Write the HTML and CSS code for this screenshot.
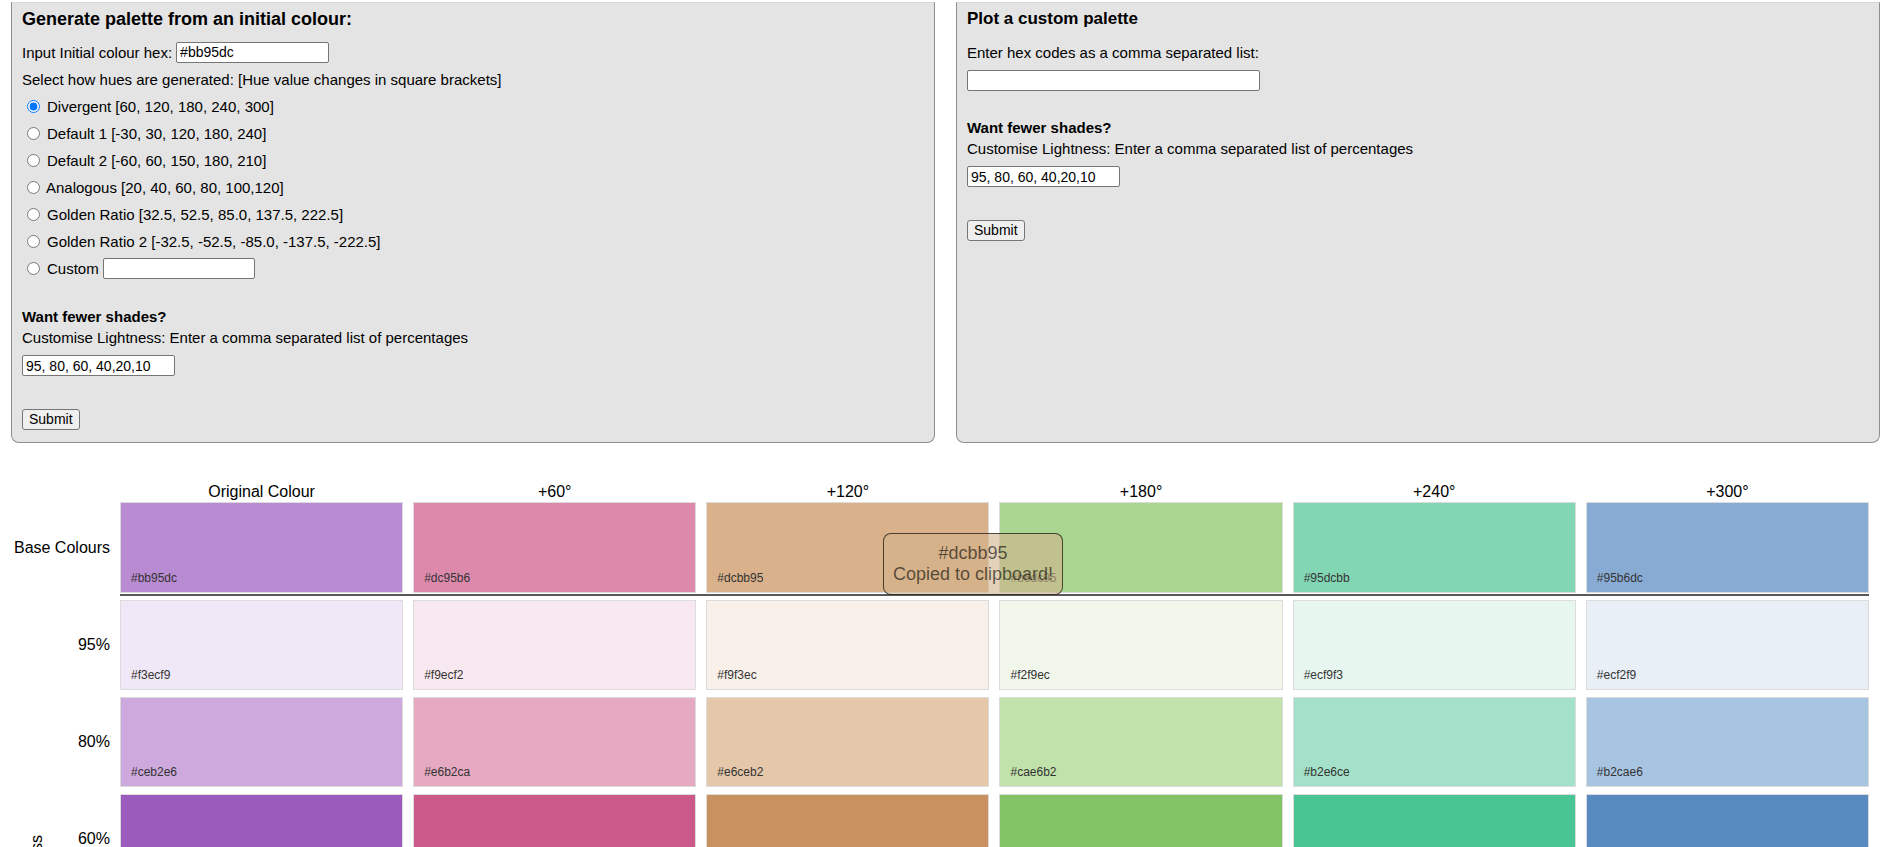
FILE: index.html
```html
<!DOCTYPE html>
<html lang="en">
<head>
<meta charset="utf-8">
<title>Colour palette generator</title>
<link rel="stylesheet" href="styles.css">
</head>
<body>
<div class="forms">
  <form class="panel panel-generate">
    <h3 class="panel-title">Generate palette from an initial colour:</h3>
    <div class="rows">
      <label class="row">Input Initial colour hex:<input class="field field-hex" type="text" value="#bb95dc"></label>
      <div class="row">Select how hues are generated: [Hue value changes in square brackets]</div>
      <label class="row"><input class="radio" type="radio" name="hue" checked>Divergent [60, 120, 180, 240, 300]</label>
      <label class="row"><input class="radio" type="radio" name="hue">Default 1 [-30, 30, 120, 180, 240]</label>
      <label class="row"><input class="radio" type="radio" name="hue">Default 2 [-60, 60, 150, 180, 210]</label>
      <label class="row"><input class="radio radio-tight" type="radio" name="hue">Analogous [20, 40, 60, 80, 100,120]</label>
      <label class="row"><input class="radio" type="radio" name="hue">Golden Ratio [32.5, 52.5, 85.0, 137.5, 222.5]</label>
      <label class="row"><input class="radio" type="radio" name="hue">Golden Ratio 2 [-32.5, -52.5, -85.0, -137.5, -222.5]</label>
      <label class="row"><input class="radio" type="radio" name="hue">Custom<input class="field field-custom" type="text"></label>
    </div>
    <div class="shades shades-generate">
      <div class="shades-title">Want fewer shades?</div>
      <div>Customise Lightness: Enter a comma separated list of percentages</div>
    </div>
    <input class="field field-light" type="text" value="95, 80, 60, 40,20,10">
    <button class="submit" type="button">Submit</button>
  </form>

  <form class="panel panel-custom">
    <h3 class="panel-title panel-title-small">Plot a custom palette</h3>
    <div class="row">Enter hex codes as a comma separated list:</div>
    <input class="field field-list" type="text">
    <div class="shades shades-custom">
      <div class="shades-title">Want fewer shades?</div>
      <div>Customise Lightness: Enter a comma separated list of percentages</div>
    </div>
    <input class="field field-light" type="text" value="95, 80, 60, 40,20,10">
    <button class="submit" type="button">Submit</button>
  </form>
</div>

<section class="palette">
  <div class="pal-row pal-head">
    <div></div>
    <div class="col-head">Original Colour</div>
    <div class="col-head">+60°</div>
    <div class="col-head">+120°</div>
    <div class="col-head">+180°</div>
    <div class="col-head">+240°</div>
    <div class="col-head">+300°</div>
  </div>

  <div class="pal-row pal-base">
    <div class="row-label">Base Colours</div>
    <div class="swatch" style="background:#b98bd2"><span>#bb95dc</span></div>
    <div class="swatch" style="background:#dd89ab"><span>#dc95b6</span></div>
    <div class="swatch" style="background:#d9b28b"><span>#dcbb95</span></div>
    <div class="swatch" style="background:#a9d791"><span>#b6dc95</span></div>
    <div class="swatch" style="background:#83d6b4"><span>#95dcbb</span></div>
    <div class="swatch" style="background:#88abd4"><span>#95b6dc</span></div>
  </div>

  <div class="rule"></div>

  <div class="lightness">
    <div class="axis"><span class="axis-text">Lightness</span></div>
    <div class="shade-rows">
      <div class="pal-row">
        <div class="row-label">95%</div>
        <div class="swatch" style="background:#f0e8f6"><span>#f3ecf9</span></div>
        <div class="swatch" style="background:#f8e8f0"><span>#f9ecf2</span></div>
        <div class="swatch" style="background:#f8f0e9"><span>#f9f3ec</span></div>
        <div class="swatch" style="background:#f0f6ea"><span>#f2f9ec</span></div>
        <div class="swatch" style="background:#e8f6f0"><span>#ecf9f3</span></div>
        <div class="swatch" style="background:#e8eff7"><span>#ecf2f9</span></div>
      </div>
      <div class="pal-row">
        <div class="row-label">80%</div>
        <div class="swatch" style="background:#cda9de"><span>#ceb2e6</span></div>
        <div class="swatch" style="background:#e6a9c2"><span>#e6b2ca</span></div>
        <div class="swatch" style="background:#e5c7aa"><span>#e6ceb2</span></div>
        <div class="swatch" style="background:#c1e2ab"><span>#cae6b2</span></div>
        <div class="swatch" style="background:#a3e1c8"><span>#b2e6ce</span></div>
        <div class="swatch" style="background:#a7c4e1"><span>#b2cae6</span></div>
      </div>
      <div class="pal-row">
        <div class="row-label">60%</div>
        <div class="swatch" style="background:#9a5bbd"><span>#9d66cc</span></div>
        <div class="swatch" style="background:#cb5a8a"><span>#cc6695</span></div>
        <div class="swatch" style="background:#c99060"><span>#cc9d66</span></div>
        <div class="swatch" style="background:#82c465"><span>#95cc66</span></div>
        <div class="swatch" style="background:#49c594"><span>#66cc9d</span></div>
        <div class="swatch" style="background:#578abf"><span>#6695cc</span></div>
      </div>
      <div class="pal-row">
        <div class="row-label">40%</div>
        <div class="swatch swatch-dark" style="background:#63288f"><span>#6a3399</span></div>
        <div class="swatch swatch-dark" style="background:#8f2858"><span>#993362</span></div>
        <div class="swatch swatch-dark" style="background:#8f6028"><span>#996a33</span></div>
        <div class="swatch swatch-dark" style="background:#578f28"><span>#629933</span></div>
        <div class="swatch swatch-dark" style="background:#288f60"><span>#33996a</span></div>
        <div class="swatch swatch-dark" style="background:#28578f"><span>#336299</span></div>
      </div>
      <div class="pal-row">
        <div class="row-label">20%</div>
        <div class="swatch swatch-dark" style="background:#311446"><span>#35194d</span></div>
        <div class="swatch swatch-dark" style="background:#46142c"><span>#4d1931</span></div>
        <div class="swatch swatch-dark" style="background:#463014"><span>#4d3519</span></div>
        <div class="swatch swatch-dark" style="background:#2c4614"><span>#314d19</span></div>
        <div class="swatch swatch-dark" style="background:#144630"><span>#194d35</span></div>
        <div class="swatch swatch-dark" style="background:#142c46"><span>#19314d</span></div>
      </div>
      <div class="pal-row">
        <div class="row-label">10%</div>
        <div class="swatch swatch-dark" style="background:#180b23"><span>#1a0d26</span></div>
        <div class="swatch swatch-dark" style="background:#230b17"><span>#260d19</span></div>
        <div class="swatch swatch-dark" style="background:#23180b"><span>#261a0d</span></div>
        <div class="swatch swatch-dark" style="background:#17230b"><span>#19260d</span></div>
        <div class="swatch swatch-dark" style="background:#0b2318"><span>#0d261a</span></div>
        <div class="swatch swatch-dark" style="background:#0b1723"><span>#0d1926</span></div>
      </div>
    </div>
  </div>
</section>

<div class="toast">#dcbb95<br>Copied to clipboard!</div>
</body>
</html>
```

FILE: styles.css
```css
* {
  box-sizing: border-box;
}

html {
  scrollbar-width: none;
}

html,
body {
  margin: 0;
  background: #ffffff;
}

body {
  font-family: "Liberation Sans", Arial, Helvetica, sans-serif;
  font-size: 15px;
  color: #000000;
}

/* ---------- Forms ---------- */

.forms {
  display: flex;
  align-items: stretch;
  gap: 21px;
  padding: 2px 11px 0 11px;
}

.panel {
  flex: 1 1 0;
  min-width: 0;
  margin: 0;
  background: #e4e4e4;
  border: 1px solid #8e8e8e;
  border-top-color: #d6d6d6;
  border-radius: 0 0 8px 8px;
  padding: 6px 10px 11px;
}

.panel-generate {
  padding-bottom: 12px;
}

.panel-title {
  margin: 0 0 13px;
  font-size: 18px;
  line-height: 21px;
  font-weight: bold;
}

.panel-generate .panel-title {
  margin-bottom: 12px;
}

.panel-title-small {
  font-size: 17px;
  line-height: 20px;
}

.rows {
  display: flex;
  flex-direction: column;
  gap: 7px;
}

.row {
  display: flex;
  align-items: center;
  height: 20px;
  line-height: 17px;
  white-space: nowrap;
}

.field {
  height: 21px;
  margin: 0;
  padding: 1px 3px;
  border: 1px solid #767676;
  border-radius: 2px;
  background: #ffffff;
  color: #000000;
  font-family: "Liberation Sans", Arial, Helvetica, sans-serif;
  font-size: 14px;
  line-height: 17px;
}

.field-hex {
  width: 153px;
  margin-left: 4px;
}

.field-custom {
  width: 152px;
  margin-left: 4px;
}

.field-list {
  display: block;
  width: 293px;
  margin-top: 8px;
}

.field-light {
  display: block;
  width: 153px;
  margin-top: 7px;
}

.radio {
  flex: none;
  width: 13px;
  height: 13px;
  margin: 0 7px 0 5px;
}

.radio-tight {
  margin-right: 6px;
}

.shades {
  line-height: 21px;
}

.shades-generate {
  margin-top: 28px;
}

.shades-custom {
  margin-top: 26px;
}

.shades-title {
  font-weight: bold;
}

.submit {
  display: block;
  margin-top: 33px;
  height: 21px;
  padding: 2px 6px;
  border: 1px solid #767676;
  border-radius: 3px;
  background: #efefef;
  color: #000000;
  font-family: "Liberation Sans", Arial, Helvetica, sans-serif;
  font-size: 14px;
  line-height: 15px;
}

/* ---------- Palette ---------- */

.palette {
  margin: 40px 22px 0 0;
  font-size: 16px;
}

.pal-row {
  display: grid;
  grid-template-columns: 110px repeat(6, minmax(0, 1fr));
  column-gap: 10px;
}

.pal-head {
  height: 18px;
  line-height: 18px;
  margin-bottom: 1px;
}

.col-head {
  text-align: center;
  white-space: nowrap;
}

.pal-base {
  height: 91px;
}

.row-label {
  align-self: center;
  text-align: right;
  white-space: nowrap;
}

.rule {
  height: 2px;
  margin: 1px 0 4px 120px;
  background: #585858;
}

.lightness {
  display: flex;
}

.axis {
  flex: none;
  width: 50px;
  padding: 235px 0 0 28px;
}

.axis-text {
  display: inline-block;
  writing-mode: vertical-rl;
  transform: rotate(180deg);
  line-height: 18px;
  white-space: nowrap;
}

.shade-rows {
  flex: 1 1 auto;
  min-width: 0;
  display: flex;
  flex-direction: column;
  gap: 7px;
}

.shade-rows .pal-row {
  grid-template-columns: 60px repeat(6, minmax(0, 1fr));
  height: 90px;
}

.swatch {
  display: flex;
  align-items: flex-end;
  border: 1px solid #dcdcdc;
  padding: 0 10px 7px;
  font-size: 12px;
  line-height: 14px;
  color: #333333;
}

.swatch-dark {
  color: #ffffff;
}

/* ---------- Copied tooltip ---------- */

.toast {
  position: absolute;
  left: 883px;
  top: 533px;
  width: 180px;
  height: 62px;
  padding: 9px 0;
  text-align: center;
  font-size: 18px;
  line-height: 20.5px;
  color: rgba(0, 0, 0, 0.6);
  background: rgba(210, 178, 138, 0.6);
  border: 1px solid rgba(0, 0, 0, 0.65);
  border-radius: 8px;
}
```
